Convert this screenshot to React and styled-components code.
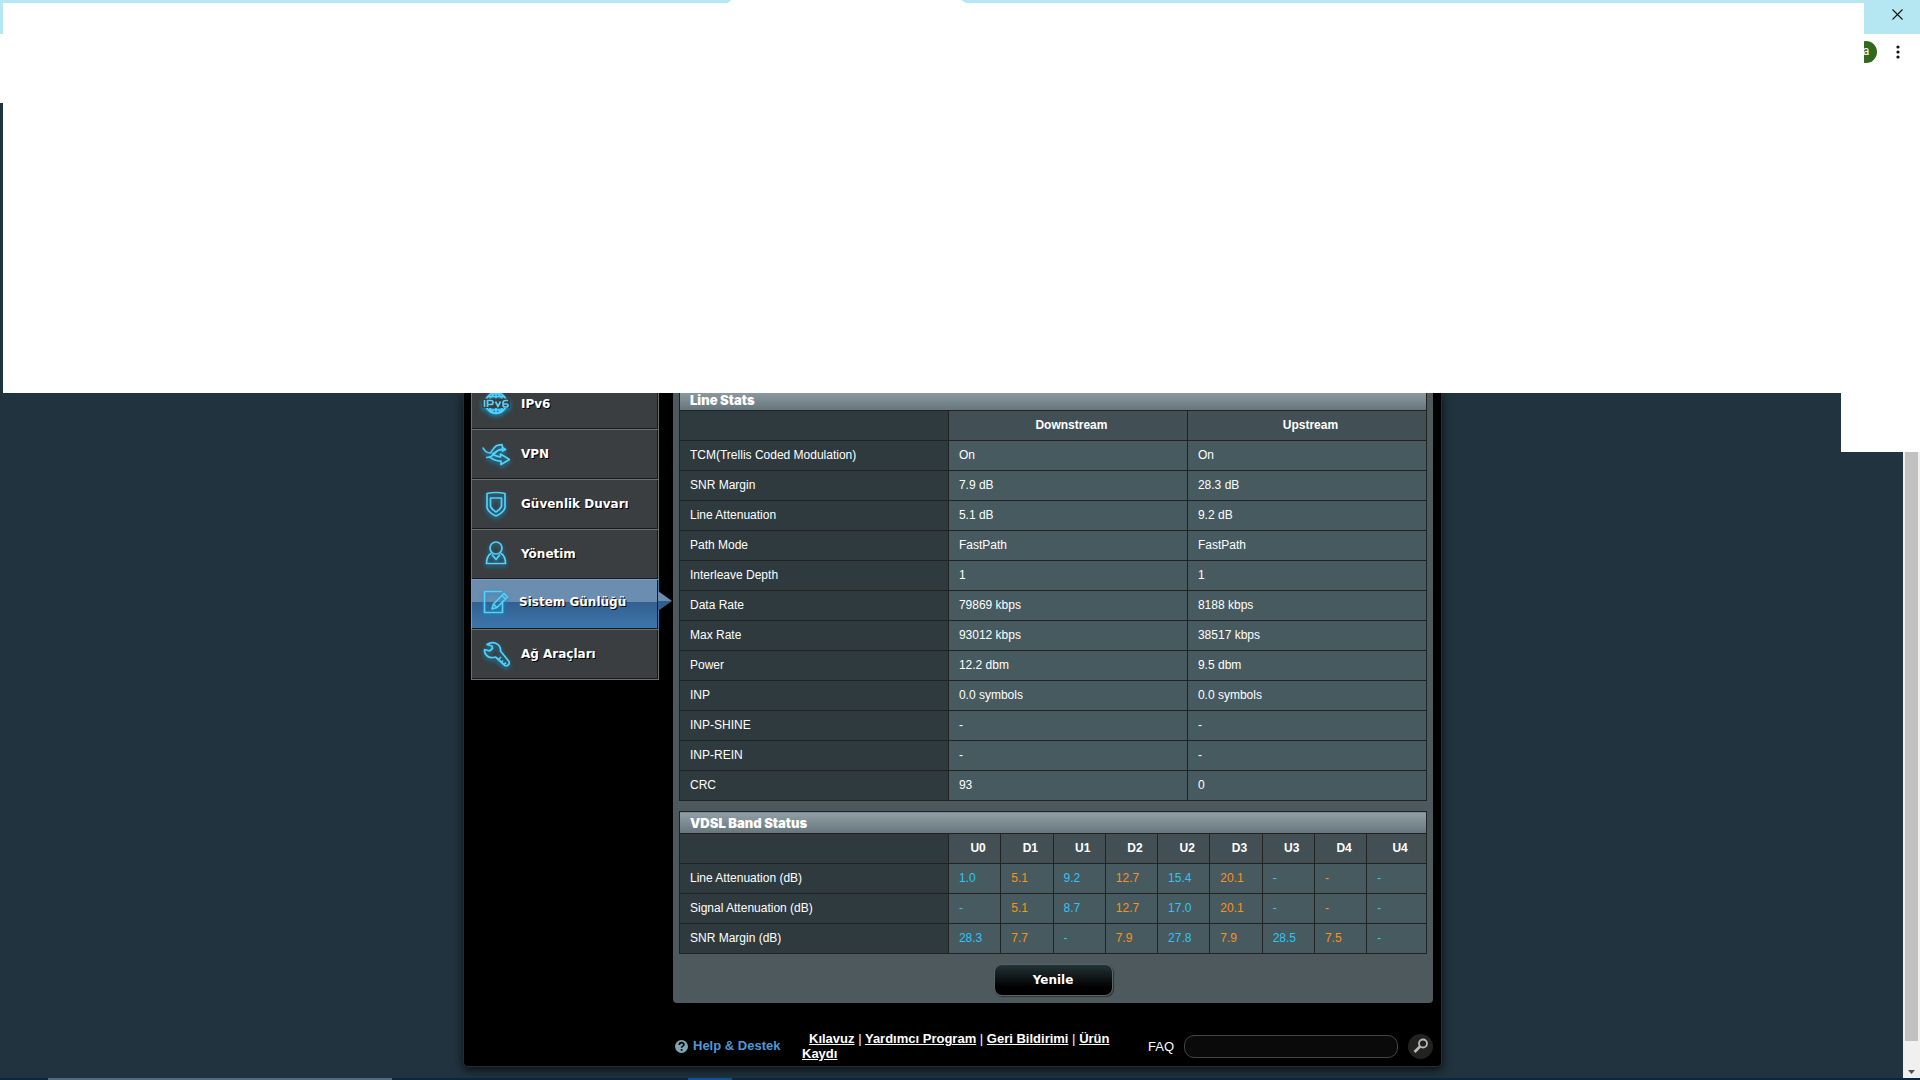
import React from "react";
import styled, { createGlobalStyle, css } from "styled-components";

const arial = '"Liberation Sans", Arial, Helvetica, sans-serif';
const verdana = '"DejaVu Sans", Verdana, sans-serif';

const GlobalStyle = createGlobalStyle`
  *, *::before, *::after { box-sizing: border-box; }
  body { margin: 0; background: #21333e; font-family: ${arial}; font-size: 12px; color: #fff; overflow: hidden; }
  button, input { font: inherit; color: inherit; margin: 0; padding: 0; border: 0; background: none; }
  h1, h2, p { margin: 0; }
`;

const Screen = styled.div`
  display: flex;
  flex-direction: column;
  height: 100vh;
`;

/* Browser chrome */
const TitleBar = styled.header`
  display: flex;
  height: 34px;
  padding-left: 3px;
  background: #b4e7f2;
`;
const TabStrip = styled.div`
  flex: 1;
  display: flex;
  flex-direction: column;
  align-items: center;
  background: linear-gradient(#b4e7f2 3px, #fff 3px);
`;
const ActiveTab = styled.div`
  width: 238px;
  height: 3px;
  margin-right: 174px;
  background: #fff;
  clip-path: polygon(0 100%, 4px 0, calc(100% - 4px) 0, 100% 100%);
`;
const CloseButton = styled.button`
  display: flex;
  justify-content: center;
  width: 56px;
  padding: 9px 0 0 10px;
  color: #111;
`;
const Toolbar = styled.div`
  display: flex;
  justify-content: flex-end;
  height: 69px;
  padding: 7px 16px 0 0;
  gap: 15px;
  background: #fff;
`;
const AvatarSlot = styled.button`
  display: flex;
  justify-content: flex-end;
  width: 13px;
  height: 22px;
  overflow: hidden;
`;
const Avatar = styled.span`
  flex: none;
  width: 22px;
  height: 22px;
  border-radius: 50%;
  background: #33691e;
  color: #fff;
  font: 12px/20px Roboto, sans-serif;
  text-align: center;
`;
const MenuButton = styled.button`
  display: flex;
  justify-content: center;
  width: 12px;
  padding-top: 4px;
  height: 22px;
`;

/* Viewport */
const Viewport = styled.div`
  position: relative;
  flex: 1;
  min-height: 0;
  display: flex;
`;
const Content = styled.main`
  flex: 1;
  display: flex;
  flex-direction: column;
  min-width: 0;
`;
const Blank = styled.div`
  flex: none;
  height: 290px;
  border-left: 3px solid #21333e;
  background: #fff;
`;
const Notch = styled.div`
  position: absolute;
  top: 0;
  right: 0;
  width: 79px;
  height: 349px;
  background: #fff;
`;
const Crop = styled.div`
  flex: 1;
  padding-left: 2px;
  overflow: hidden;
`;
const Scrollbar = styled.div`
  width: 17px;
  display: flex;
  flex-direction: column;
  align-items: center;
  background: #f0f0f0;
`;
const Thumb = styled.div`
  flex: 1;
  width: 13px;
  background: #c1c1c1;
`;
const ScrollDown = styled.button`
  width: 17px;
  height: 37px;
  padding-top: 25px;
  line-height: 0;
`;
const Taskbar = styled.footer`
  display: flex;
  height: 2px;
  background: #0a2740;
`;
const Task = styled.div`
  width: ${(p) => p.$width}px;
  margin-left: ${(p) => p.$gap}px;
  background: ${(p) => p.$color};
`;

/* Router page */
const Shell = styled.div`
  width: 979px;
  margin: 0 auto;
  padding: 0 8px 5px;
  border: 1px solid #2c2c2c;
  border-top: 0;
  border-radius: 0 0 5px 5px;
  background: #000;
  box-shadow: 0 3px 10px #0a1116;
`;
const Columns = styled.div`
  display: flex;
  gap: 14px;
`;
const Nav = styled.nav`
  flex: none;
  width: 188px;
  margin: -14px 0 0 -1px;
`;
const NavItem = styled.a`
  position: relative;
  display: flex;
  align-items: center;
  height: 50px;
  gap: 11px;
  padding: 0 0 1px 10px;
  border-top: 1px solid #6b6f70;
  border-left: 1px solid #6b6f70;
  border-right: 1px solid #6b6f70;
  background: #3a3e40;
  box-shadow: inset -1px -1px 0 #181a1b;
  color: #fff;
  font: bold 12px/16px ${verdana};
  text-shadow: 1px 1px 0 #000;
  text-decoration: none;
  svg { flex: none; filter: drop-shadow(0 2px 2px #0e8fc4); }
  &:last-child { height: 51px; border-bottom: 1px solid #6b6f70; }
  ${(p) => p.$active && css`
    gap: 9px;
    padding-bottom: 5px;
    border-color: #7c9ab8;
    border-right-color: #4579a8;
    background: linear-gradient(#6a8db0 22px, #31608f 22px, #3e76ad);
    &::after {
      content: "";
      position: absolute;
      left: 100%;
      top: 11px;
      width: 14px;
      height: 20px;
      background: linear-gradient(#6a8db0 50%, #31608f 50%);
      clip-path: polygon(0 0, 100% 50%, 0 100%);
    }
  `}
`;
const Panel = styled.section`
  flex: 1;
  padding: 0 6px 7px;
  border-radius: 0 0 4px 4px;
  background: #4d595d;
`;
const Table = styled.table`
  width: 100%;
  margin-top: ${(p) => (p.$first ? "-5px" : "10px")};
  border-collapse: collapse;
  table-layout: fixed;
  line-height: 14px;
`;
const cell = css`
  height: 30px;
  padding: 0 3px 2px 10px;
  border: 1px solid #222;
`;
const Title = styled.th`
  height: 22px;
  padding: 0 10px;
  border: 1px solid #222;
  background: linear-gradient(#92a0a5, #66757c);
  font: 900 13px/14px Inter, ${arial};
  text-align: left;
`;
const Label = styled.th`
  ${cell}
  background: #2f3a3e;
  font-weight: normal;
  text-align: left;
`;
const Corner = styled.td`
  ${cell}
  background: #2f3a3e;
`;
const Head = styled.th`
  ${cell}
  background: #425055;
  font-weight: bold;
`;
const Value = styled.td`
  ${cell}
  background: #475a5f;
  color: ${(p) => p.$color || "#fff"};
`;
const RefreshButton = styled.button`
  display: block;
  width: 119px;
  height: 32px;
  margin: 10px auto 0;
  border: 1px solid #596266;
  border-radius: 8px;
  background: linear-gradient(#233337, #000 75%);
  box-shadow: 1px 1px 1px #2d3537;
  font: bold 12px/16px ${verdana};
  text-shadow: 1px 1px 0 #000;
`;

/* Page footer */
const Footer = styled.footer`
  display: flex;
  align-items: center;
  padding: 28px 0 0 203px;
`;
const Help = styled.span`
  display: flex;
  align-items: center;
  gap: 5px;
  width: 127px;
  color: #4f98d8;
  font: bold 13px/16px ${arial};
  white-space: nowrap;
`;
const Links = styled.p`
  width: 312px;
  text-indent: 7px;
  font: bold 13px/15px ${arial};
  a { color: #fff; }
  span { font-weight: normal; }
`;
const FaqForm = styled.form`
  flex: 1;
  display: flex;
  align-items: center;
  justify-content: flex-end;
  gap: 10px;
  font-size: 13px;
`;
const FaqInput = styled.input`
  width: 214px;
  height: 23px;
  padding: 0 10px;
  border: 1px solid #444;
  border-radius: 10px;
  background: #0a0a0a;
`;
const SearchButton = styled.button`
  display: flex;
  align-items: center;
  justify-content: center;
  width: 25px;
  height: 25px;
  border-radius: 50%;
  background: #222220;
`;

const icons = {
  ipv6: (
    <>
      <circle cx="14" cy="13" r="10.5" />
      <path d="M14 2.500C10 5 8.500 7 8 9M14 2.500c4 2.500 5.500 4.500 6 6.500M6 6.500h16M8 18c1 3 3 5 6 5.500 3-.5 5-2.500 6-5.500M6 20h16M14 2.500v6M14 18v5.500" />
      <path d="M0 8.500h28v9.500H0z" fill="#3a3e40" stroke="none" />
      <path d="M2.500 10v7M5.500 17v-6.500h3.500q2 0 2 2t-2 2H5.500M13.500 11.500l2.500 5 2.500-5M26 10.500h-2.500q-2.500 0-2.500 2.500v2q0 2 2.500 2h.5q2 0 2-1.500t-2-1.500H21" />
    </>
  ),
  vpn: (
    <>
      <path d="M.8 7.500C2.500 11 5 13 8 13c2-1 3-5 6-7 2-1 4-1 6-1.500l.5 3 3 2-3 1.500v-1.500c-4 0-7 2-10 4.500 3 2 6 3 8 3v-3l9 5.500-8.500 5V21C13 21.500 9 18 7 16.500" />
      <path d="M4 17.500c5 0 7-2 9-4.500 1.500-2 3.500-3.500 7.500-4" />
    </>
  ),
  shield: (
    <>
      <path d="M5 3.500q9-2 18 0V18q-2 5-9 8-7-3-9-8z" />
      <path d="M8.500 8h11v8.500q-1.500 3-5.500 5.500-4-2.500-5.500-5.500z" />
    </>
  ),
  user: (
    <>
      <circle cx="14" cy="8" r="6" />
      <path d="M9.500 13C6 15 4.500 18 4.500 23.500h19c0-5.500-1.500-8.500-5-10.500M10 14.500l4 5 4-5" />
    </>
  ),
  log: (
    <>
      <path d="M20 3.500H2.500v21h18V13" />
      <path d="M10 21l1.500-5L22 5.500l3.500 3.500L15 19.500zM11.500 16l3.500 3.500M20 7.500l3.500 3.500" />
    </>
  ),
  tools: (
    <>
      <path d="M2.500 9.500l5 1.500 3-2.500-.5-2.500-5-1.500c6-4 14-1 13.500 6.500l8.500 10.500c1 2.500-1.500 5-4 4L13.500 17c-6 2-11.500-1.500-11-7.500z" />
      <path d="M16 20l3-3M19 22.500l2-2M21.500 25l2.500-2.500" />
    </>
  ),
};

const nav = [
  ["ipv6", "IPv6"],
  ["vpn", "VPN"],
  ["shield", "Güvenlik Duvarı"],
  ["user", "Yönetim"],
  ["log", "Sistem Günlüğü"],
  ["tools", "Ağ Araçları"],
];

const lineStats = [
  ["TCM(Trellis Coded Modulation)", "On", "On"],
  ["SNR Margin", "7.9 dB", "28.3 dB"],
  ["Line Attenuation", "5.1 dB", "9.2 dB"],
  ["Path Mode", "FastPath", "FastPath"],
  ["Interleave Depth", "1", "1"],
  ["Data Rate", "79869 kbps", "8188 kbps"],
  ["Max Rate", "93012 kbps", "38517 kbps"],
  ["Power", "12.2 dbm", "9.5 dbm"],
  ["INP", "0.0 symbols", "0.0 symbols"],
  ["INP-SHINE", "-", "-"],
  ["INP-REIN", "-", "-"],
  ["CRC", "93", "0"],
];

const bands = ["U0", "D1", "U1", "D2", "U2", "D3", "U3", "D4", "U4"];
const bandRows = [
  ["Line Attenuation (dB)", "1.0", "5.1", "9.2", "12.7", "15.4", "20.1", "-", "-", "-"],
  ["Signal Attenuation (dB)", "-", "5.1", "8.7", "12.7", "17.0", "20.1", "-", "-", "-"],
  ["SNR Margin (dB)", "28.3", "7.7", "-", "7.9", "27.8", "7.9", "28.5", "7.5", "-"],
];

export default function App() {
  return (
    <Screen>
      <GlobalStyle />
      <TitleBar>
        <TabStrip><ActiveTab /></TabStrip>
        <CloseButton aria-label="Close">
          <svg width="11" height="11" viewBox="0 0 11 11" stroke="currentColor" strokeWidth="1.1"><path d="M.5.5l10 10M10.500.5l-10 10" /></svg>
        </CloseButton>
      </TitleBar>
      <Toolbar>
        <AvatarSlot aria-label="Profile"><Avatar>a</Avatar></AvatarSlot>
        <MenuButton aria-label="Menu">
          <svg width="4" height="14" viewBox="0 0 4 14" fill="#111"><circle cx="2" cy="2" r="1.600" /><circle cx="2" cy="7" r="1.600" /><circle cx="2" cy="12" r="1.600" /></svg>
        </MenuButton>
      </Toolbar>

      <Viewport>
        <Content>
          <Blank />
          <Crop>
            <Shell>
              <Columns>
                <Nav>
                  {nav.map(([icon, text]) => (
                    <NavItem key={icon} href="#" $active={icon === "log"}>
                      <svg width="28" height="28" viewBox="0 0 28 28" fill="none" stroke="#55d0f8" strokeWidth="1.700" strokeLinejoin="round">{icons[icon]}</svg>
                      {text}
                    </NavItem>
                  ))}
                </Nav>
                <Panel>
                  <Table $first>
                    <colgroup><col width="36%" /><col width="32%" /><col width="32%" /></colgroup>
                    <thead>
                      <tr><Title colSpan={3}>Line Stats</Title></tr>
                      <tr><Corner /><Head>Downstream</Head><Head>Upstream</Head></tr>
                    </thead>
                    <tbody>
                      {lineStats.map(([label, down, up]) => (
                        <tr key={label}><Label>{label}</Label><Value>{down}</Value><Value>{up}</Value></tr>
                      ))}
                    </tbody>
                  </Table>
                  <Table>
                    <colgroup>
                      <col width="36%" />
                      {bands.slice(0, 8).map((b) => <col key={b} width="7%" />)}
                      <col width="8%" />
                    </colgroup>
                    <thead>
                      <tr><Title colSpan={10}>VDSL Band Status</Title></tr>
                      <tr><Corner />{bands.map((b) => <Head key={b}>{b}</Head>)}</tr>
                    </thead>
                    <tbody>
                      {bandRows.map(([label, ...values]) => (
                        <tr key={label}>
                          <Label>{label}</Label>
                          {values.map((v, i) => (
                            <Value key={bands[i]} $color={i % 2 ? "#f7931e" : "#33c3f5"}>{v}</Value>
                          ))}
                        </tr>
                      ))}
                    </tbody>
                  </Table>
                  <RefreshButton>Yenile</RefreshButton>
                </Panel>
              </Columns>
              <Footer>
                <Help>
                  <svg width="13" height="13" viewBox="0 0 13 13" fill="none">
                    <circle cx="6.500" cy="6.500" r="6.500" fill="#7fa6b3" />
                    <path d="M4.300 5c0-3 4.600-3 4.600-.4 0 1.600-2.300 1.400-2.300 3.200M6.600 9v1.800" stroke="#000" strokeWidth="1.700" />
                  </svg>
                  Help &amp; Destek
                </Help>
                <Links>
                  <a href="#">Kılavuz</a> <span>|</span> <a href="#">Yardımcı Program</a> <span>|</span> <a href="#">Geri Bildirimi</a> <span>|</span> <a href="#">Ürün Kaydı</a>
                </Links>
                <FaqForm>
                  <label htmlFor="faq">FAQ</label>
                  <FaqInput id="faq" />
                  <SearchButton type="button" aria-label="Search">
                    <svg width="16" height="16" viewBox="0 0 16 16" fill="none" stroke="#b9b9b9">
                      <circle cx="10" cy="5.500" r="4" strokeWidth="1.800" />
                      <path d="M7 8.500l-5.500 5.500" strokeWidth="2.600" />
                    </svg>
                  </SearchButton>
                </FaqForm>
              </Footer>
            </Shell>
          </Crop>
        </Content>
        <Scrollbar>
          <Thumb />
          <ScrollDown aria-label="Scroll down">
            <svg width="7" height="4" viewBox="0 0 7 4" fill="#505050"><path d="M0 0h7L3.500 4z" /></svg>
          </ScrollDown>
        </Scrollbar>
        <Notch />
      </Viewport>

      <Taskbar>
        <Task $gap={48} $width={344} $color="#4f6b80" />
        <Task $gap={296} $width={44} $color="#0b5394" />
      </Taskbar>
    </Screen>
  );
}
